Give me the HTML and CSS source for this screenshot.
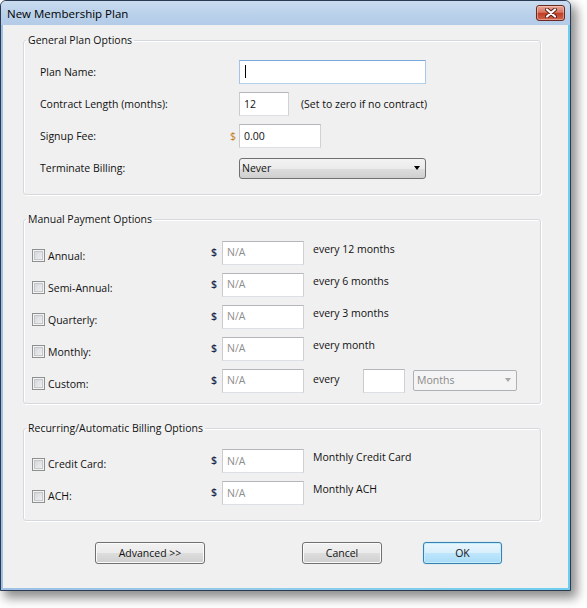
FILE: index.html
```html
<!DOCTYPE html>
<html>
<head>
<meta charset="utf-8">
<title>New Membership Plan</title>
<link rel="stylesheet" href="styles.css">
</head>
<body>
<div class="window">
  <div class="titlebar">
    <span class="title">New Membership Plan</span>
    <div class="close">
      <svg width="12" height="10" viewBox="0 0 12 10">
        <path d="M2 1.5 L10 8.5 M10 1.5 L2 8.5" stroke="#5a1d14" stroke-width="4" stroke-linecap="round" fill="none"/>
        <path d="M2 1.5 L10 8.5 M10 1.5 L2 8.5" stroke="#ffffff" stroke-width="2.2" stroke-linecap="round" fill="none"/>
      </svg>
    </div>
  </div>
  <div class="frame">
    <div class="client">
      <fieldset class="group g1">
        <legend>General Plan Options</legend>
        <div class="inner">
          <div class="frow">
            <span class="flabel">Plan Name:</span><span class="pre"></span>
            <div class="tb w187 focus"><span class="caret"></span></div>
          </div>
          <div class="frow">
            <span class="flabel">Contract Length (months):</span><span class="pre"></span>
            <div class="tb w50">12</div>
            <span class="hint">(Set to zero if no contract)</span>
          </div>
          <div class="frow">
            <span class="flabel">Signup Fee:</span><span class="pre">$</span>
            <div class="tb w82">0.00</div>
          </div>
          <div class="frow">
            <span class="flabel">Terminate Billing:</span><span class="pre"></span>
            <div class="combo w187"><span>Never</span><span class="arrow"></span></div>
          </div>
        </div>
      </fieldset>

      <fieldset class="group g2">
        <legend>Manual Payment Options</legend>
        <div class="inner">
          <div class="prow">
            <div class="chkcell"><span class="chk"></span><span class="clabel">Annual:</span></div>
            <span class="dollar">$</span><div class="tb w82 na">N/A</div>
            <span class="note">every 12 months</span>
          </div>
          <div class="prow">
            <div class="chkcell"><span class="chk"></span><span class="clabel">Semi-Annual:</span></div>
            <span class="dollar">$</span><div class="tb w82 na">N/A</div>
            <span class="note">every 6 months</span>
          </div>
          <div class="prow">
            <div class="chkcell"><span class="chk"></span><span class="clabel">Quarterly:</span></div>
            <span class="dollar">$</span><div class="tb w82 na">N/A</div>
            <span class="note">every 3 months</span>
          </div>
          <div class="prow">
            <div class="chkcell"><span class="chk"></span><span class="clabel">Monthly:</span></div>
            <span class="dollar">$</span><div class="tb w82 na">N/A</div>
            <span class="note">every month</span>
          </div>
          <div class="prow">
            <div class="chkcell"><span class="chk"></span><span class="clabel">Custom:</span></div>
            <span class="dollar">$</span><div class="tb w82 na">N/A</div>
            <span class="note every">every</span>
            <div class="tb w42"></div>
            <div class="combo disabled w104"><span>Months</span><span class="arrow"></span></div>
          </div>
        </div>
      </fieldset>

      <fieldset class="group g3">
        <legend>Recurring/Automatic Billing Options</legend>
        <div class="inner">
          <div class="prow tall">
            <div class="chkcell"><span class="chk"></span><span class="clabel">Credit Card:</span></div>
            <span class="dollar">$</span><div class="tb w82 na">N/A</div>
            <span class="note">Monthly Credit Card</span>
          </div>
          <div class="prow tall">
            <div class="chkcell"><span class="chk"></span><span class="clabel">ACH:</span></div>
            <span class="dollar">$</span><div class="tb w82 na">N/A</div>
            <span class="note">Monthly ACH</span>
          </div>
        </div>
      </fieldset>

      <div class="buttons">
        <div class="btn adv">Advanced &gt;&gt;</div>
        <div class="btn cancel">Cancel</div>
        <div class="btn ok">OK</div>
      </div>
    </div>
  </div>
</div>
</body>
</html>
```

FILE: styles.css
```css
html {
  height: 608px;
}

body {
  margin: 0;
  min-height: 608px;
  background: #ffffff;
  font-family: "Open Sans", "Noto Sans", sans-serif;
  font-size: 10.5px;
  color: #111111;
}

.window {
  width: 569px;
  height: 589px;
  border: 1px solid #2a3a52;
  border-radius: 6px 6px 0 0;
  box-shadow: 5px 6px 11px 1px rgba(0, 0, 0, 0.45);
  display: flex;
  flex-direction: column;
  background: #b9d1ea;
}

.titlebar {
  height: 24px;
  flex: none;
  display: flex;
  align-items: center;
  padding-left: 6px;
  border-radius: 5px 5px 0 0;
  background: linear-gradient(#cadcef, #b8d0ea 60%, #b3cbe7);
}

.title {
  font-size: 11.5px;
  color: #000000;
}

.close {
  margin-left: auto;
  margin-right: 5px;
  align-self: flex-start;
  margin-top: 4px;
  width: 27px;
  height: 14px;
  border: 1px solid #6b2a20;
  border-radius: 3px;
  background: linear-gradient(#e9a796, #d67562 45%, #c23e25 52%, #cd6550 100%);
  box-shadow: inset 0 0 0 1px rgba(255, 220, 210, 0.45);
  display: flex;
  align-items: center;
  justify-content: center;
}

.close svg {
  display: block;
}

.frame {
  flex: 1;
  padding: 0 2px 2px 2px;
  background: linear-gradient(90deg, #9fc0e4, #8fcbea 50%, #6ccdee);
  display: flex;
}

.client {
  flex: 1;
  background: #f0f0f0;
  padding: 8px 27px 0 20px;
}

.group {
  margin: 0;
  padding: 0;
  min-width: 0;
  border: 1px solid #d5d9de;
  border-radius: 3px;
  box-shadow: inset 1px 1px 0 #ffffff, 1px 1px 0 #ffffff;
}

.group legend {
  margin-left: 2px;
  padding: 0 2px;
  line-height: 14px;
  font-size: 10.5px;
}

.inner {
  display: flex;
  flex-direction: column;
}

.g1 .inner {
  padding: 13px 0 14px 16px;
  gap: 8px;
}

.g2 {
  margin-top: 17px;
}

.g2 .inner {
  padding: 15px 0 11px 8px;
  gap: 9px;
}

.g3 {
  margin-top: 17px;
}

.g3 .inner {
  padding: 14px 0 15px 8px;
  gap: 8px;
}

.frow {
  display: flex;
  align-items: center;
  height: 24px;
}

.flabel {
  width: 189px;
}

.pre {
  width: 10px;
  box-sizing: border-box;
  padding-right: 3px;
  text-align: right;
  color: #c27a18;
}

.tb {
  box-sizing: border-box;
  height: 24px;
  background: #ffffff;
  border: 1px solid;
  border-color: #b4b6bb #cfd1d5 #dcdfe3 #c9cbcf;
  padding-left: 4px;
  display: flex;
  align-items: center;
  padding-bottom: 1px;
}

.tb.focus {
  border-color: #7aa7dc #a9c8ea #b3d1ee #a4c3e7;
}

.caret {
  width: 1px;
  height: 13px;
  background: #000000;
  margin-left: 1px;
}

.w187 { width: 187px; }
.w50 { width: 50px; }
.w82 { width: 82px; }
.w42 { width: 42px; }
.w104 { width: 104px; }

.hint {
  margin-left: 12px;
}

.combo {
  box-sizing: border-box;
  height: 21px;
  border: 1px solid #707070;
  border-radius: 3px;
  background: linear-gradient(#f3f3f3, #ebebeb 50%, #dddddd 51%, #cfcfcf);
  display: flex;
  align-items: center;
  padding-left: 2px;
  padding-bottom: 1px;
}

.combo .arrow {
  margin-left: auto;
  margin-right: 5px;
  width: 0;
  height: 0;
  border-left: 3.5px solid transparent;
  border-right: 3.5px solid transparent;
  border-top: 4px solid #000000;
}

.combo.disabled {
  margin-left: 8px;
  border-color: #adb2b5;
  border-radius: 2px;
  background: #f4f4f4;
  color: #8a8a8a;
  padding-left: 3px;
}

.combo.disabled .arrow {
  border-top-color: #a8a8a8;
}

.prow {
  display: flex;
  align-items: center;
  height: 23px;
}

.prow.tall {
  height: 24px;
}

.chkcell {
  width: 176px;
  display: flex;
  align-items: center;
  padding-top: 6px;
}

.chk {
  width: 13px;
  height: 13px;
  box-sizing: border-box;
  border: 1px solid #8e8f8f;
  background: linear-gradient(135deg, #cdd0d5, #f6f6f6);
  box-shadow: inset 0 0 0 1px #f3f3f3, inset 0 0 0 2px #c3c6cb;
}

.clabel {
  margin-left: 3px;
}

.dollar {
  width: 14px;
  box-sizing: border-box;
  padding-right: 5px;
  padding-bottom: 2px;
  text-align: right;
  color: #1b2a52;
  font-weight: 600;
}

.tb.na {
  color: #8e8e8e;
}

.note {
  margin-left: 9px;
  padding-bottom: 8px;
}

.note.every {
  width: 50px;
  flex: none;
  padding-bottom: 4px;
}

.buttons {
  display: flex;
  margin-top: 21px;
  padding-left: 72px;
}

.btn {
  box-sizing: border-box;
  height: 22px;
  border: 1px solid #707070;
  border-radius: 3px;
  background: linear-gradient(#f2f2f2, #ebebeb 50%, #dddddd 51%, #cfcfcf);
  box-shadow: inset 0 0 0 1px #fbfbfb;
  display: flex;
  align-items: center;
  justify-content: center;
  padding-bottom: 1px;
}

.adv { width: 110px; }
.cancel { width: 80px; margin-left: 97px; }
.ok {
  width: 79px;
  margin-left: 41px;
  border-color: #3c7fb1;
  background: linear-gradient(#e9f6fd, #d8effc 50%, #bee6fd 51%, #a9dbf6);
  box-shadow: inset 0 0 0 1px #c5eefd, 0 0 1px #5fc6f0;
}
```
